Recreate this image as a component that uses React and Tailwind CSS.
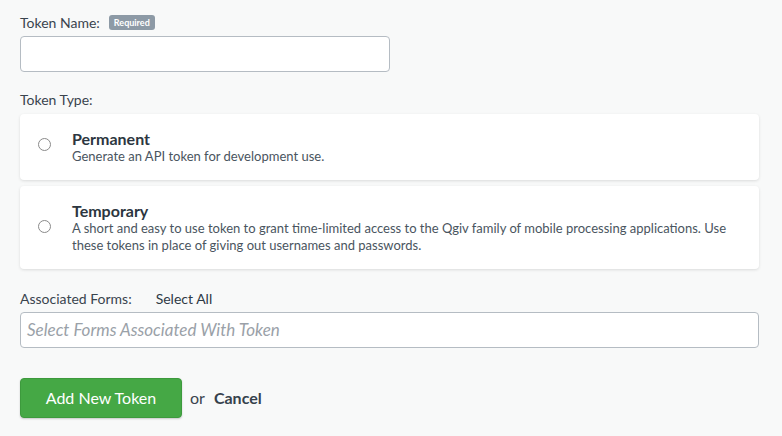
import React from "react";

function Radio({ className = "" }) {
  return <span className={"w-[13px] h-[13px] rounded-full border border-[#8a8a8a] bg-white shrink-0 " + className} />;
}

export default function App() {
  return (
    <div className="w-[782px] h-[436px] bg-[#f8f9f9] px-5 pt-[13px] font-['Lato','Liberation_Sans',sans-serif] text-[#3a444e]">
      <div className="flex items-center h-[18px]">
        <span className="text-[14px]">Token Name:</span>
        <span className="ml-[9px] h-[15px] px-[5px] rounded-[3px] bg-[#8d9aa6] text-white text-[9px] font-bold leading-[15px]">Required</span>
      </div>
      <div className="mt-[5px] w-[370px] h-[36px] bg-white border border-[#b5bcc3] rounded-[4px]" />
      <div className="mt-[19px] text-[14px] h-[18px] leading-[18px]">Token Type:</div>
      <div className="mt-[5px] flex flex-col gap-[6px] w-[739px]">
        <div className="h-[66px] rounded-[4px] bg-white shadow-[0_1px_3px_rgba(0,0,0,0.12)] flex items-center pl-[18px] pr-6">
          <Radio className="mb-[6px]" />
          <div className="ml-[21px]">
            <div className="text-[16px] font-bold text-[#2c3640] leading-[18px]">Permanent</div>
            <div className="text-[13px] text-[#4a5560] leading-[17px]">Generate an API token for development use.</div>
          </div>
        </div>
        <div className="h-[83px] rounded-[4px] bg-white shadow-[0_1px_3px_rgba(0,0,0,0.12)] flex items-center pl-[18px] pr-6">
          <Radio className="mb-[2px]" />
          <div className="ml-[21px]">
            <div className="text-[16px] font-bold text-[#2c3640] leading-[18px]">Temporary</div>
            <div className="text-[13px] text-[#4a5560] leading-[17px]">
              A short and easy to use token to grant time-limited access to the Qgiv family of mobile processing applications. Use these tokens in place of giving out usernames and passwords.
            </div>
          </div>
        </div>
      </div>
      <div className="mt-[20px] flex items-center h-[18px] text-[14px]">
        <span>Associated Forms:</span>
        <span className="ml-[24px] text-[#2f3a45]">Select All</span>
      </div>
      <div className="mt-[5px] w-[739px] h-[36px] bg-white border border-[#b5bcc3] rounded-[4px] flex items-center px-[6px]">
        <span className="italic text-[17px] text-[#9aa1a8]">Select Forms Associated With Token</span>
      </div>
      <div className="mt-[30px] flex items-center">
        <button className="w-[162px] h-[40px] rounded-[4px] bg-[#45a845] border border-[#3d9a3d] text-white text-[16px] shadow-[0_1px_2px_rgba(0,0,0,0.2)]">Add New Token</button>
        <span className="ml-[8px] text-[16px]">or</span>
        <span className="ml-[9px] text-[16px] font-bold text-[#36414c]">Cancel</span>
      </div>
    </div>
  );
}
